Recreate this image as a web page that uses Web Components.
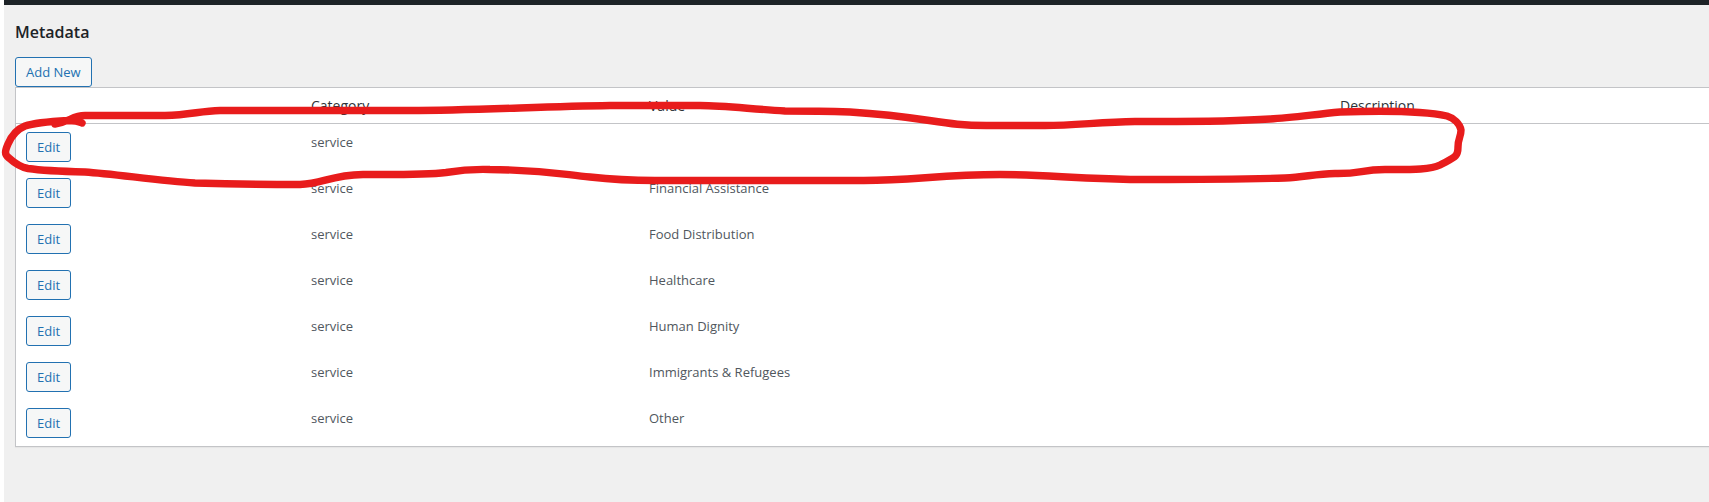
<!DOCTYPE html>
<html lang="en">
<head>
<meta charset="utf-8">
<title>Metadata</title>
<style>
  html, body {
    margin: 0;
    min-height: 100%;
  }
  body {
    background: #fff;
    font-family: "Segoe UI", "Open Sans", "Noto Sans", sans-serif;
    font-size: 13px;
    line-height: 20px;
    color: #3c434a;
    overflow-x: hidden;
  }
</style>
</head>
<body>
<admin-page heading="Metadata">
  <wp-button slot="actions">Add New</wp-button>
  <metadata-table></metadata-table>
  <marker-loop slot="overlay"></marker-loop>
</admin-page>

<script>
const pageTemplate = document.createElement('template')
pageTemplate.innerHTML = `
  <style>
  :host {
    position: relative;
    display: flex;
    flex-direction: column;
    box-sizing: border-box;
    min-height: 100vh;
    margin-left: 4px;
    background: #f0f0f0;
  }
  header {
    height: 5px;
    background: #1d2327;
  }
  main {
    padding: 16px 0 0 11px;
  }
  h1 {
    margin: 0 0 14px;
    font-size: 16px;
    font-weight: 600;
    line-height: 22px;
    color: #1d2327;
  }
  .actions {
    display: flex;
  }
  </style>
  <header></header>
  <main>
    <h1></h1>
    <div class="actions"><slot name="actions"></slot></div>
    <slot></slot>
  </main>
  <slot name="overlay"></slot>
`

class AdminPage extends HTMLElement {
  constructor() {
    super()
    this.shadow = this.attachShadow({ mode: 'open' })
    this.shadow.appendChild(pageTemplate.content.cloneNode(true))
  }

  connectedCallback() {
    this.shadow.querySelector('h1').textContent = this.getAttribute('heading')
  }
}

const buttonTemplate = document.createElement('template')
buttonTemplate.innerHTML = `
  <style>
  :host {
    display: inline-flex;
    vertical-align: top;
  }
  button {
    box-sizing: border-box;
    height: 30px;
    margin: 0;
    padding: 0 10px;
    border: 1px solid #2271b1;
    border-radius: 3px;
    background: #f6f7f7;
    color: #2271b1;
    font: inherit;
    line-height: 28px;
    white-space: nowrap;
    cursor: pointer;
  }
  button:hover {
    background: #f0f0f1;
    color: #0a4b78;
  }
  </style>
  <button type="button"><slot></slot></button>
`

class WpButton extends HTMLElement {
  constructor() {
    super()
    this.attachShadow({ mode: 'open' })
      .appendChild(buttonTemplate.content.cloneNode(true))
  }
}

const tableTemplate = document.createElement('template')
tableTemplate.innerHTML = `
  <style>
  :host {
    display: block;
  }
  table {
    width: 100%;
    table-layout: fixed;
    border: 1px solid #c3c4c7;
    border-right: 0;
    border-spacing: 0;
    background: #fff;
    box-shadow: 0 1px 1px rgba(0, 0, 0, .04);
  }
  .edit { width: 285px; }
  .category { width: 338px; }
  .description { width: 379px; }
  th, td {
    padding: 8px 10px;
    text-align: left;
    vertical-align: top;
  }
  thead th, thead td {
    border-bottom: 1px solid #c3c4c7;
  }
  th {
    font-size: 14px;
    font-weight: 400;
    line-height: 19px;
    color: #2c3338;
  }
  td {
    color: #50575e;
  }
  </style>
  <table>
    <colgroup>
      <col class="edit"><col class="category"><col><col class="description">
    </colgroup>
    <thead>
      <tr><td></td><th scope="col">Category</th><th scope="col">Value</th><th scope="col">Description</th></tr>
    </thead>
    <tbody></tbody>
  </table>
`

const items = [
  { category: 'service', value: '', description: '' },
  { category: 'service', value: 'Financial Assistance', description: '' },
  { category: 'service', value: 'Food Distribution', description: '' },
  { category: 'service', value: 'Healthcare', description: '' },
  { category: 'service', value: 'Human Dignity', description: '' },
  { category: 'service', value: 'Immigrants & Refugees', description: '' },
  { category: 'service', value: 'Other', description: '' }
]

class MetadataTable extends HTMLElement {
  constructor() {
    super()
    this.shadow = this.attachShadow({ mode: 'open' })
    this.shadow.appendChild(tableTemplate.content.cloneNode(true))
    this.renderRows()
  }

  renderRows() {
    const body = this.shadow.querySelector('tbody')
    items.forEach(item => {
      const row = body.insertRow()
      const edit = document.createElement('wp-button')
      edit.textContent = 'Edit'
      row.insertCell().appendChild(edit)
      row.insertCell().textContent = item.category
      row.insertCell().textContent = item.value
      row.insertCell().textContent = item.description
    })
  }
}

const markerTemplate = document.createElement('template')
markerTemplate.innerHTML = `
  <style>
  :host {
    position: absolute;
    top: 0;
    left: -4px;
    pointer-events: none;
  }
  svg {
    display: block;
  }
  path {
    fill: none;
    stroke: #e81c1c;
    stroke-width: 7.4;
    stroke-linecap: round;
    stroke-linejoin: round;
  }
  </style>
  <svg width="1480" height="200" viewBox="0 0 1480 200" aria-hidden="true">
    <path d="M82 123 C78 121 74 120.500 68 120.500 C50 121.500 35 122.500 25 126 C15 130 11 137 8 144
      C5 151 4 154 9 158 C15 163.500 20 167 28 168.500 C45 171 65 171.500 85 172 C115 174 160 181 195 183
      C230 184 265 184.500 300 184.500 C323 184 330 175 363 174.500 C395 174.500 425 175 446 172.500
      C464 169.500 475 169 490 169.500 C545 170 560 174 590 177 C612 179.500 630 180.500 655 180.500
      H860 C910 181 940 174.500 1000 174.500 C1050 174.500 1080 179.500 1150 179.500 C1200 179.500 1250 179 1285 178
      C1305 177 1315 174 1335 173.500 C1362 174 1360 169.500 1385 169.500 C1410 169.500 1430 170 1440 165
      C1455 157 1458 157 1458 147 C1458 138 1461 137 1461 130 C1460 124 1454 118 1447 116
      C1420 110 1370 111 1340 112 C1310 115 1290 118 1270 119 C1225 122 1180 121.500 1135 121.500
      C1100 122 1075 125.500 1045 125.500 H990 C940 126 930 117 850 112 C820 111 800 111 785 111
      C750 109 725 105.500 700 105.500 H610 C540 106.500 475 110.500 410 110.500 H220 C200 111 190 115 165 115.500
      H85 C72 115.500 70 122 55 124"/>
  </svg>
`

class MarkerLoop extends HTMLElement {
  constructor() {
    super()
    this.attachShadow({ mode: 'open' })
      .appendChild(markerTemplate.content.cloneNode(true))
  }
}

customElements.define('wp-button', WpButton)
customElements.define('metadata-table', MetadataTable)
customElements.define('marker-loop', MarkerLoop)
customElements.define('admin-page', AdminPage)
</script>
</body>
</html>
